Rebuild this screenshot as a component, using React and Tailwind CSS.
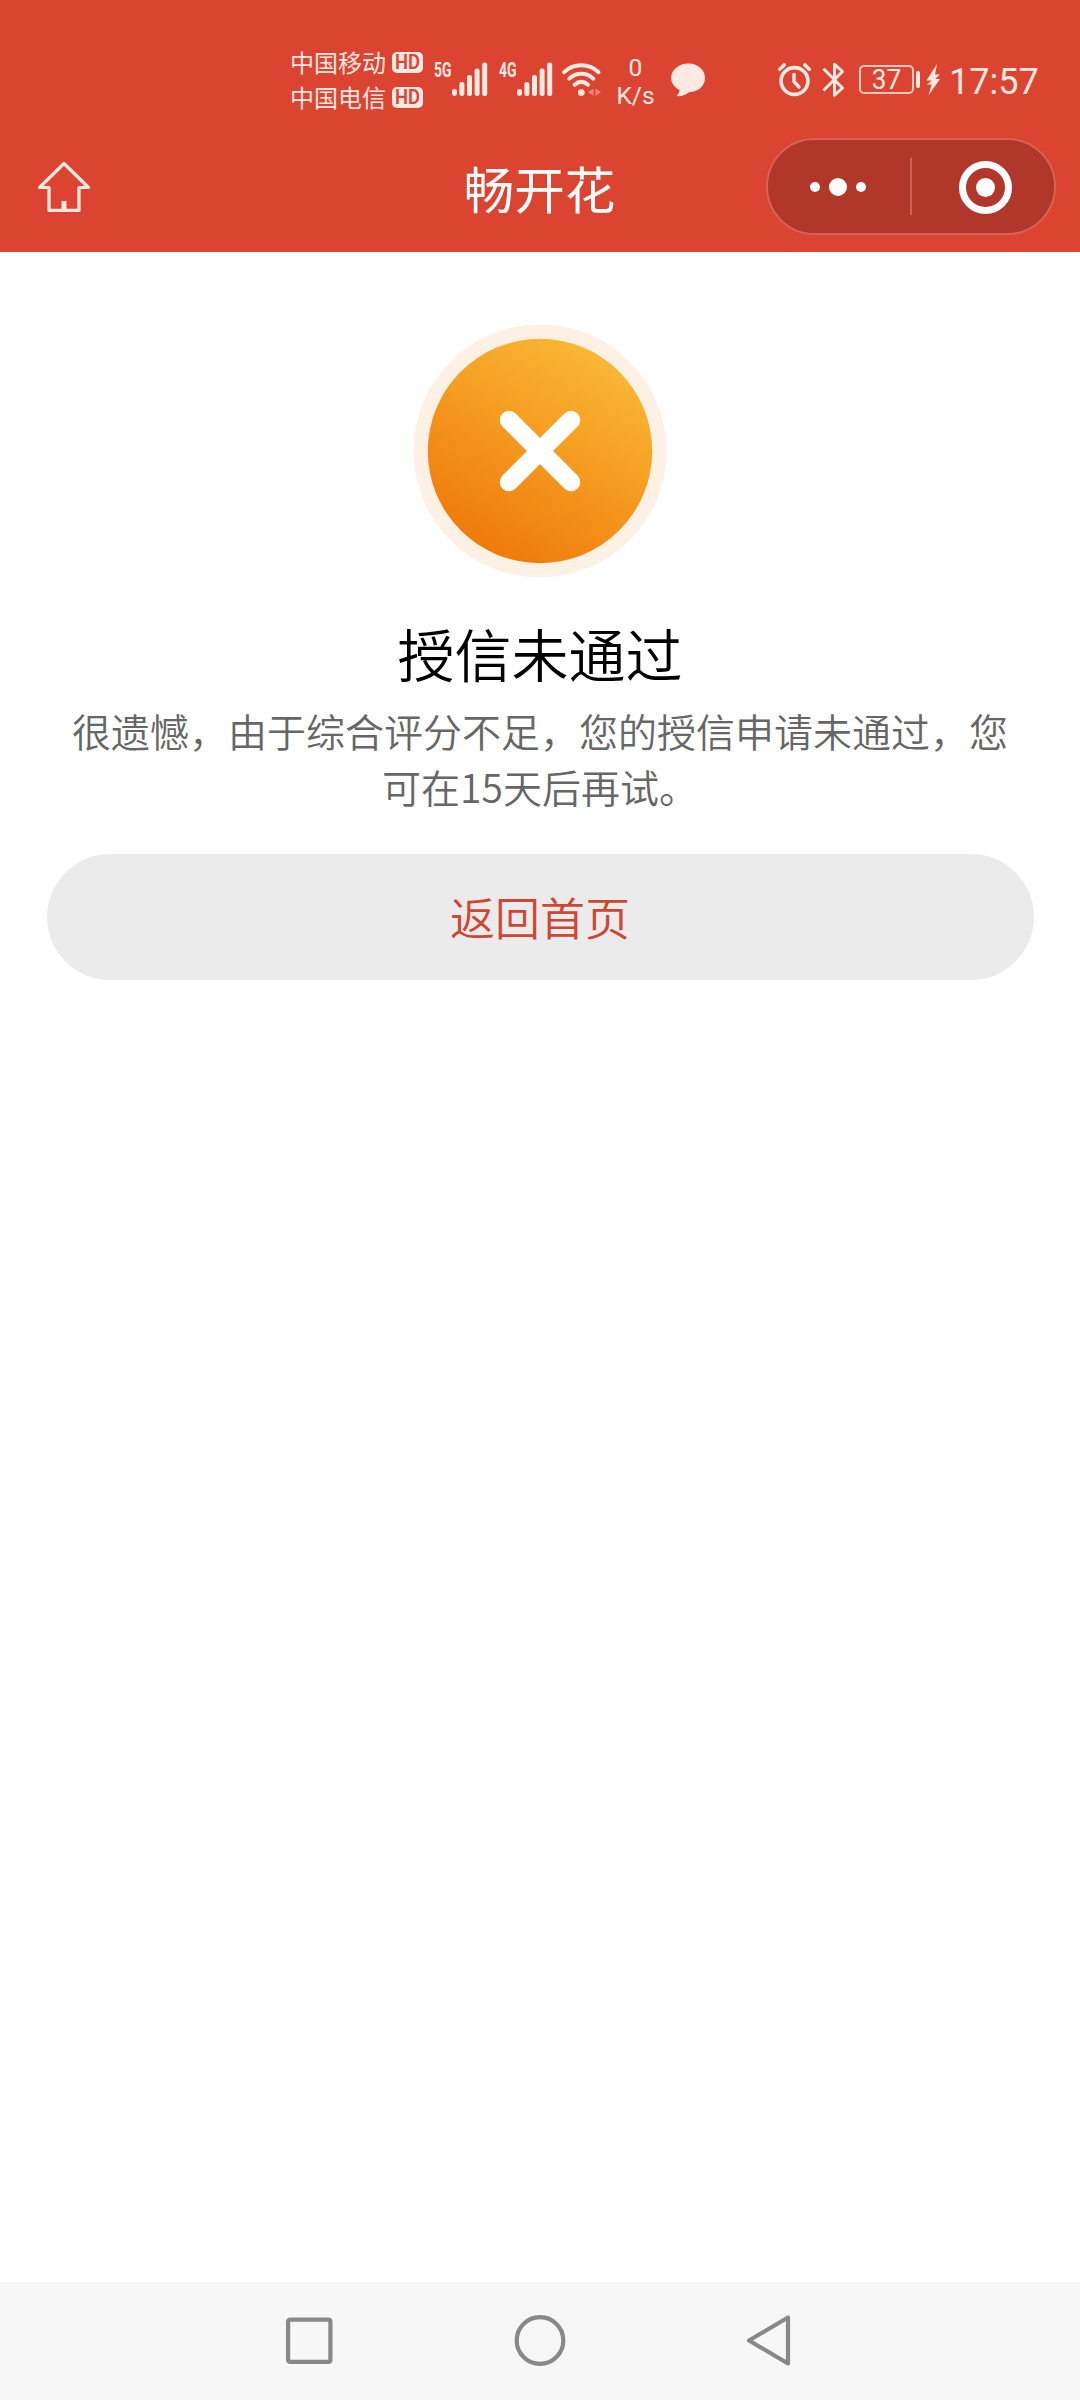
// Colour used by the status bar glyphs
const TINT = "#ffe9e2";

// Carrier name with its HD badge
const Carrier = ({ name }) => (
  <div className="flex items-center gap-[6px] h-[35px]">
    <span className="text-[24px] leading-[33px] pb-[2px] whitespace-nowrap">{name}</span>
    <span className="flex items-center justify-center w-[31px] h-[21px] rounded-[5px] bg-[#ffe9e2] text-[#dc4432] font-[Roboto,sans-serif] font-semibold text-[20px] leading-[21px]">
      <span className="inline-block scale-x-[0.92]">HD</span>
    </span>
  </div>
);

// Network type label + signal strength bars
const Signal = ({ type }) => (
  <div className="flex items-start h-[34px]">
    <span className="w-[18px] h-[17px] flex items-center justify-center font-[Roboto,sans-serif] font-bold text-[20.500px] leading-[17px]">
      <span className="inline-block scale-x-[0.68]">{type}</span>
    </span>
    <svg width="36" height="34" viewBox="0 0 36 34" fill={TINT}>
      <rect x="0" y="27" width="5" height="7" rx="2.4" />
      <rect x="7.4" y="20" width="5" height="14" rx="2.2" />
      <rect x="15" y="13" width="5" height="21" rx="2.2" />
      <rect x="22.6" y="6.6" width="5" height="27.4" rx="2.2" />
      <rect x="30.2" y="0.4" width="5" height="33.6" rx="2.2" />
    </svg>
  </div>
);

const StatusBar = () => (
  <div className="flex items-start h-[138px] text-[#ffe9e2]">
    <div className="flex flex-col pt-[45px] pl-[290px] w-[434px]">
      <Carrier name="中国移动" />
      <Carrier name="中国电信" />
    </div>

    <div className="flex pt-[62px] w-[127px] gap-[11px]">
      <Signal type="5G" />
      <Signal type="4G" />
    </div>

    {/* Wi-Fi with the faint traffic arrows */}
    <svg className="mt-[62px]" width="42" height="36" viewBox="0 0 42 36" fill="none">
      <g stroke={TINT} strokeWidth="4" strokeLinecap="round">
        <path d="M3 10.2C13 1 27.500 1 37.500 10.200" />
        <path d="M8.300 16.600C15.500 10 25.200 10 32.300 16.600" />
        <path d="M13.600 22.800C17.800 19.200 22.800 19.200 27 22.800" />
      </g>
      <circle cx="20.300" cy="30.600" r="3.400" fill={TINT} />
      <path d="M32.500 26.500v7.500l-5.500-4zM34.500 26.500v7.500l5.500-4z" fill="#ee8576" />
    </svg>

    {/* Network speed */}
    <div className="flex flex-col items-center pt-[50px] pl-[7px] pr-[4px] w-[62px] font-[Roboto,sans-serif] text-[24.500px]">
      <span className="h-[28px] leading-[35px]">0</span>
      <span className="h-[28px] leading-[35px]">K/s</span>
    </div>

    <svg className="mt-[63px] ml-[6px]" width="35" height="34" viewBox="0 0 35 34" fill={TINT}>
      <path d="M17.300 0.500C26.800 0.500 34 6.700 34 15c0 8-6.800 14-16 14.200-2.500 2.200-6.500 3.900-11 4 -1 0-1.200-0.800-0.500-1.500 1.300-1.400 2-2.900 2.100-4.700C3.300 24.500 0.200 20.200 0.200 15 0.200 6.700 7.800 0.500 17.300 0.500z" />
    </svg>

    {/* Alarm */}
    <svg className="mt-[62px] ml-[72px]" width="34" height="35" viewBox="0 0 34 35" fill="none" stroke={TINT} strokeLinecap="round" strokeLinejoin="round">
      <circle cx="16.500" cy="19" r="13.400" strokeWidth="3.600" />
      <path d="M16 12.500v7l5 5.500" strokeWidth="3.400" />
      <path d="M1.800 7.200L6.200 3M31.200 7.200L26.800 3" strokeWidth="3.600" />
    </svg>

    {/* Bluetooth */}
    <svg className="mt-[62px] ml-[10px]" width="24" height="36" viewBox="0 0 24 36" fill="none" stroke={TINT} strokeWidth="3" strokeLinejoin="round">
      <path d="M1.500 6.800L20.500 26 12.500 33.200V2.300L20.500 9.500 1.500 28.500" />
    </svg>

    {/* Battery */}
    <div className="flex items-center mt-[65px] ml-[13px] h-[29px] gap-[2px]">
      <div className="flex items-center justify-center w-[55px] h-[29px] border-2 border-[#ffc9bd] rounded-[5px] font-[Roboto,sans-serif] text-[27.500px] leading-[29px]">
        <span className="inline-block scale-x-[0.95]">37</span>
      </div>
      <div className="w-[4px] h-[17px] rounded-[2px] bg-[#ffe9e2]"></div>
    </div>
    <svg className="mt-[64px] ml-[6px]" width="15" height="32" viewBox="0 0 15 32" fill={TINT}>
      <path d="M11 0L0.500 16.500H6L0.800 20.500 5.500 20.500 2.500 31.500 14 15H9.500L13.800 10.500H9z" />
    </svg>

    <span className="mt-[62px] ml-[8px] font-[Roboto,sans-serif] text-[36px] leading-[41px]">17:57</span>
  </div>
);

const NavBar = () => (
  <div className="flex items-start justify-between h-[114px] pl-[37px] pr-[24px]">
    <div className="w-[276px] pt-[23px]">
      <svg width="54" height="52" viewBox="0 0 54 52" fill="none" stroke={TINT} strokeWidth="3.200" strokeLinejoin="round">
        <path d="M27 2.500L2.500 26.500H12V49.400H42V26.500H51.500z" />
        <path d="M27 40v8" strokeWidth="5" />
      </svg>
    </div>

    <h1 className="pt-[12px] text-[50.500px] leading-[74px] text-white">畅开花</h1>

    {/* Mini program capsule */}
    <div className="flex items-center w-[290px] h-[97px] rounded-full border-2 border-[#d96255] bg-[#b0372a]">
      <div className="flex items-center justify-center gap-[9px] w-[142px] pr-[3px]">
        <i className="w-[10px] h-[10px] rounded-full bg-white"></i>
        <i className="w-[18px] h-[18px] rounded-full bg-white"></i>
        <i className="w-[10px] h-[10px] rounded-full bg-white"></i>
      </div>
      <div className="w-[2px] h-[57px] bg-[#cb6257]"></div>
      <div className="flex-1 flex items-center justify-center pl-[5px] pt-[1px]">
        <div className="flex items-center justify-center w-[53px] h-[53px] rounded-full border-[7px] border-white">
          <i className="w-[19px] h-[19px] rounded-full bg-white"></i>
        </div>
      </div>
    </div>
  </div>
);

const App = () => {
  return (
    <div className="flex flex-col w-[1080px] h-[2400px] bg-white font-['Noto_Sans_CJK_SC',sans-serif]">
      <header className="h-[252px] bg-[#dc4432]">
        <StatusBar />
        <NavBar />
      </header>

      <main className="flex-1 flex flex-col items-center px-[47px] pt-[72px]">
        {/* Failure icon */}
        <svg width="254" height="254" viewBox="0 0 254 254">
          <defs>
            <linearGradient id="orange" x1="0.750" y1="0.070" x2="0.250" y2="0.930">
              <stop offset="0" stopColor="#fab733" />
              <stop offset="1" stopColor="#ef7b0b" />
            </linearGradient>
          </defs>
          <circle cx="127" cy="127" r="126.500" fill="#fdf1e5" />
          <circle cx="127" cy="127" r="112.200" fill="url(#orange)" />
          <path d="M96 96L158 158M158 96L96 158" stroke="#fff" strokeWidth="18.500" strokeLinecap="round" />
        </svg>

        <h2 className="mt-[32px] text-[57px] leading-[84px] font-[350] text-black">授信未通过</h2>
        <p className="mt-[8px] w-[940px] text-center text-[39px] leading-[56px] font-[350] text-[#666]">
          很遗憾，由于综合评分不足，您的授信申请未通过，您可在15天后再试。
        </p>

        <button className="mt-[40px] w-[987px] h-[126px] rounded-full bg-[#ebebeb] text-[45px] font-[350] text-[#cf4633]">
          返回首页
        </button>
      </main>

      {/* System navigation */}
      <footer className="flex items-center h-[118px] pl-[283px] gap-[178px] bg-[#f7f7f7]">
        <svg width="52" height="52" viewBox="0 0 52 52" fill="none" stroke="#888" strokeWidth="4.200">
          <rect x="5.100" y="4.600" width="42.300" height="42.300" rx="2" />
        </svg>
        <svg width="54" height="54" viewBox="0 0 54 54" fill="none" stroke="#888" strokeWidth="4.200">
          <circle cx="27" cy="26.500" r="23.300" />
        </svg>
        <svg width="46" height="54" viewBox="0 0 46 54" fill="none" stroke="#888" strokeWidth="4.200" strokeLinejoin="round">
          <path d="M43 3.500V49.500L4 26.500z" />
        </svg>
      </footer>
    </div>
  );
};

export default App;
